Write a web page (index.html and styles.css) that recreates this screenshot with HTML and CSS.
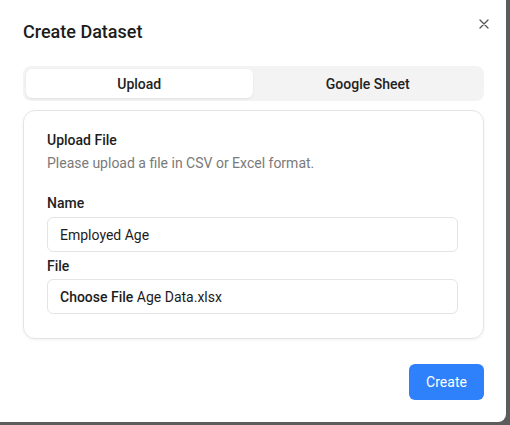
FILE: index.html
```html
<!DOCTYPE html>
<html>
<head>
<meta charset="utf-8">
<link rel="stylesheet" href="styles.css">
</head>
<body>
<div class="dialog">
  <button class="close" aria-label="Close">
    <svg width="10" height="10" viewBox="0 0 10 10"><path d="M1 1L9 9M9 1L1 9" stroke="#555" stroke-width="1.3" stroke-linecap="round"/></svg>
  </button>
  <h2 class="title">Create Dataset</h2>
  <div class="tabs">
    <div class="tab active">Upload</div>
    <div class="tab">Google Sheet</div>
  </div>
  <div class="card">
    <div class="card-title">Upload File</div>
    <div class="card-desc">Please upload a file in CSV or Excel format.</div>
    <label class="label first">Name</label>
    <div class="input">Employed Age</div>
    <label class="label second">File</label>
    <div class="input"><span class="choose">Choose File</span> Age Data.xlsx</div>
  </div>
  <div class="footer">
    <button class="create">Create</button>
  </div>
</div>
</body>
</html>
```

FILE: styles.css
```css
html, body {
  margin: 0;
  padding: 0;
  height: 100%;
  overflow: hidden;
  background: #5c5c5c;
  font-family: Roboto, "Noto Sans", sans-serif;
  color: #1c1c1c;
}
.dialog {
  position: relative;
  box-sizing: border-box;
  margin: -10px 0 0 -10px;
  width: 516px;
  height: 432px;
  background: #fff;
  border-radius: 8px;
  padding: 30px 22px 22px 33px;
  display: flex;
  flex-direction: column;
}
.close {
  position: absolute;
  top: 29px;
  right: 17px;
  border: 0;
  background: none;
  padding: 0;
  width: 10px;
  height: 10px;
  line-height: 0;
}
.title {
  margin: 0;
  font-size: 18px;
  line-height: 24px;
  font-weight: 500;
}
.tabs {
  margin-top: 22px;
  background: #f3f3f3;
  border-radius: 8px;
  padding: 3px;
  display: grid;
  grid-template-columns: 1fr 1fr;
  gap: 2px;
}
.tab {
  height: 29px;
  display: flex;
  align-items: center;
  justify-content: center;
  font-size: 14px;
  font-weight: 500;
  color: #222;
  border-radius: 6px;
}
.tab.active {
  background: #fff;
  box-shadow: 0 1px 2px rgba(0,0,0,0.08);
}
.card {
  margin-top: 9px;
  border: 1px solid #e4e4e4;
  border-radius: 12px;
  box-shadow: 0 1px 3px rgba(0,0,0,0.06);
  padding: 19px 25px 24px 23px;
  display: flex;
  flex-direction: column;
}
.card-title {
  font-size: 14px;
  line-height: 20px;
  font-weight: 500;
}
.card-desc {
  margin-top: 3px;
  font-size: 14px;
  line-height: 20px;
  color: #7a7a7a;
}
.label {
  font-size: 14px;
  line-height: 20px;
  font-weight: 500;
  color: #222;
}
.label.first {
  margin: 20px 0 4px;
}
.label.second {
  margin: 4px 0 3px;
}
.input {
  box-sizing: border-box;
  height: 35px;
  border: 1px solid #e4e4e4;
  border-radius: 6px;
  padding: 0 12px;
  display: flex;
  align-items: center;
  font-size: 14px;
  white-space: pre;
}
.choose {
  font-weight: 500;
}
.footer {
  margin-top: 25px;
  display: flex;
  justify-content: flex-end;
}
.create {
  width: 75px;
  height: 36px;
  border: 0;
  border-radius: 6px;
  background: #2f80fb;
  color: #fff;
  font-family: inherit;
  font-size: 14px;
}
```
